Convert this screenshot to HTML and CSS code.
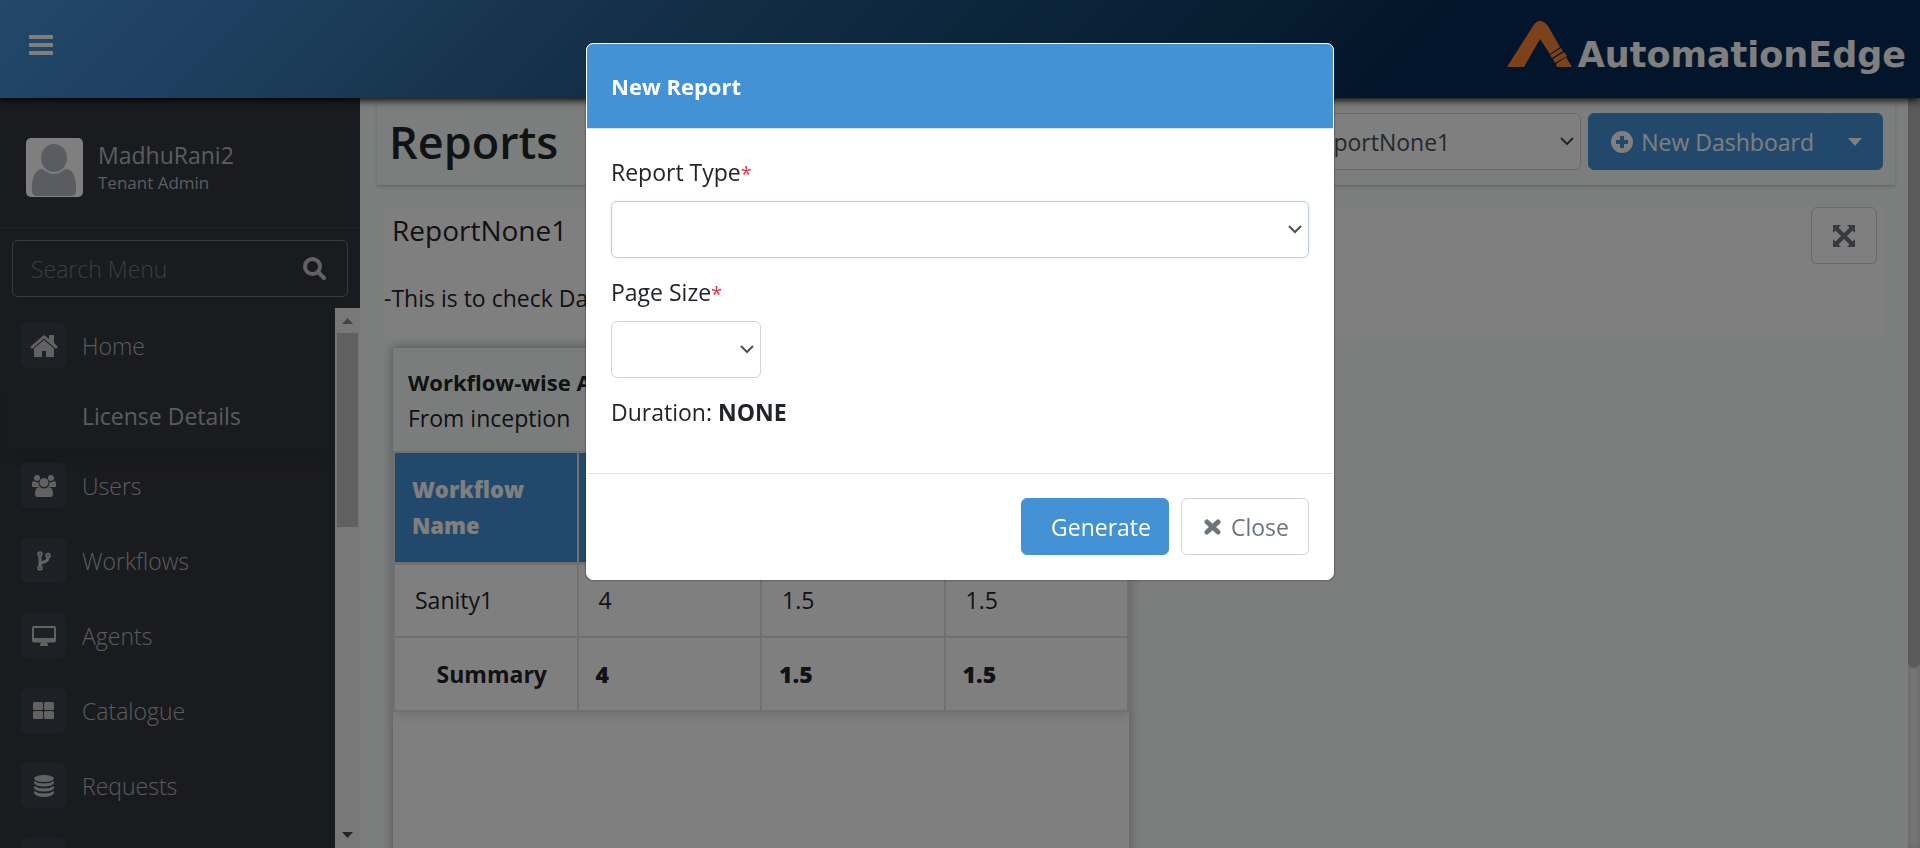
FILE: index.html
```
<!DOCTYPE html>
<html lang="en">
<head>
<meta charset="utf-8">
<title>AutomationEdge - Reports</title>
<link rel="stylesheet" href="styles.css">
</head>
<body>
<div class="app">
  <header class="topbar">
    <button class="menu-toggle" type="button" aria-label="Toggle menu">
      <svg width="24" height="20" viewBox="0 0 24 20" fill="currentColor"><rect width="24" height="4" rx="1"/><rect y="8" width="24" height="4" rx="1"/><rect y="16" width="24" height="4" rx="1"/></svg>
    </button>
    <a class="brand" href="#" aria-label="AutomationEdge">
      <svg class="brand-mark" width="65" height="46" viewBox="0 0 65 46"><path fill="#f98435" d="M0 46 26 5Q29 0 33 0T41 5L53 26 43 33 33 18 17 46Z"/><path fill="#f98435" d="M43 34 54 27 56 30 45 37ZM46 38 57 31 60 35 48 42ZM49 43 59 36 65 46H50Z"/></svg>
      <span class="brand-name">AutomationEdge</span>
    </a>
  </header>
  <div class="shell">
    <aside class="sidebar">
      <div class="profile">
        <svg class="avatar" width="57" height="59" viewBox="0 0 57 59"><rect width="57" height="59" rx="5" fill="#fff"/><path fill="#b4b9c4" d="M6 54C5 42 9 31 16 31Q28 38 40 31C48 31 51 42 50 54Q49 58 45 58H11Q7 58 6 54Z"/><ellipse cx="28" cy="20" rx="14" ry="15" fill="#b4b9c4" stroke="#fff" stroke-width="2"/></svg>
        <div><div class="profile-name">MadhuRani2</div><div class="profile-role">Tenant Admin</div></div>
      </div>
      <div class="search">
        <input type="text" placeholder="Search Menu" aria-label="Search Menu">
        <svg width="23" height="23" viewBox="0 0 23 23" fill="none" stroke="currentColor"><circle cx="9.500" cy="9.500" r="7.500" stroke-width="4"/><path d="m15 15 6 6" stroke-width="4" stroke-linecap="round"/></svg>
      </div>
      <div class="nav-area">
        <nav class="nav">
          <a class="nav-item" href="#"><span class="tile"><svg width="28" height="22" viewBox="0 0 28 22" fill="currentColor"><path d="M14 0 19 4V0H24V8L28 12 26 14 14 3.500 2 14 0 12Z"/><path d="M14 5 24 13.500V21Q24 22 23 22H16V16H12V22H5Q4 22 4 21V13.500Z"/></svg></span>Home</a>
          <a class="nav-item nav-sub" href="#">License Details</a>
          <a class="nav-item" href="#"><span class="tile"><svg width="24" height="22" viewBox="0 0 24 22" fill="currentColor"><circle cx="5" cy="3" r="3"/><circle cx="19" cy="3" r="3"/><circle cx="12" cy="7.500" r="4.500"/><path d="M0 12V9Q0 6 2 6 4 8 6.500 7 6.500 10 8 12ZM24 12V9Q24 6 22 6 20 8 17.500 7 17.500 10 16 12ZM8 12Q12 15 16 12 21 12 21 19 21 22 18 22H6Q3 22 3 19 3 12 8 12Z"/></svg></span>Users</a>
          <a class="nav-item" href="#"><span class="tile"><svg width="14" height="20" viewBox="0 0 14 20" fill="none" stroke="currentColor" stroke-width="2"><circle cx="3" cy="3" r="1.800"/><circle cx="3" cy="17" r="1.800"/><circle cx="11" cy="4.500" r="1.800"/><path d="M3 5V15M11 6.500Q11 10 7 11 3 12 3 14" stroke-width="3"/></svg></span>Workflows</a>
          <a class="nav-item" href="#"><span class="tile"><svg width="24" height="20" viewBox="0 0 24 20" fill="currentColor"><path fill-rule="evenodd" d="M2 0H22Q24 0 24 2V14.500Q24 16.500 22 16.500H15L16 19V20H8V19L9 16.500H2Q0 16.500 0 14.500V2Q0 0 2 0ZM2 2V12H22V2Z"/></svg></span>Agents</a>
          <a class="nav-item" href="#"><span class="tile"><svg width="21" height="17" viewBox="0 0 21 17" fill="currentColor"><rect width="10" height="8" rx="1.500"/><rect x="11" width="10" height="8" rx="1.500"/><rect y="9" width="10" height="8" rx="1.500"/><rect x="11" y="9" width="10" height="8" rx="1.500"/></svg></span>Catalogue</a>
          <a class="nav-item" href="#"><span class="tile"><svg width="20" height="22" viewBox="0 0 20 22" fill="currentColor"><ellipse cx="10" cy="3.500" rx="10" ry="3.500"/><path d="M0 6Q4 8.500 10 8.500T20 6V8Q18 11.500 10 11.500T0 8ZM0 11Q4 13.500 10 13.500T20 11V13Q18 16.500 10 16.500T0 13ZM0 16Q4 18.500 10 18.500T20 16V18Q18 22 10 22T0 18Z"/></svg></span>Requests</a>
          <a class="nav-item" href="#" aria-label="More"><span class="tile"></span></a>
        </nav>
        <div class="scrollbar" aria-hidden="true">
          <svg width="11" height="6" viewBox="0 0 11 6"><path d="M0 6 5.500 0 11 6Z" fill="#888"/></svg>
          <div class="scroll-thumb"></div>
          <svg width="11" height="6" viewBox="0 0 11 6"><path d="M0 0 5.500 6 11 0Z" fill="#484848"/></svg>
        </div>
      </div>
    </aside>
    <main class="content">
      <div class="page-head">
        <h1>Reports</h1>
        <div class="page-actions">
          <div class="select dash-select"><select aria-label="Dashboard"><option>ReportNone1</option></select><svg class="chevron" width="14" height="9" viewBox="0 0 14 9"><path d="m1 1 6 6 6-6"/></svg></div>
          <div class="btn-group">
            <button class="btn btn-primary" type="button"><svg width="22" height="22" viewBox="0 0 22 22"><circle cx="11" cy="11" r="11" fill="#fff"/><path d="M11 5V17M5 11H17" stroke="#4492d6" stroke-width="4"/></svg>New Dashboard</button>
            <button class="btn btn-primary btn-caret" type="button" aria-label="More options"><svg width="14" height="8" viewBox="0 0 14 8"><path d="M0 0H14L7 8Z" fill="#fff"/></svg></button>
          </div>
        </div>
      </div>
      <section class="intro">
        <div class="intro-head">
          <h2>ReportNone1</h2>
          <button class="btn btn-outline btn-expand" type="button" aria-label="Expand"><svg width="22" height="22" viewBox="0 0 22 22" fill="currentColor"><path d="M0 0H8L5.500 2.500 11 8 16.500 2.500 14 0H22V8L19.500 5.500 14 11 19.500 16.500 22 14V22H14L16.500 19.500 11 14 5.500 19.500 8 22H0V14L2.500 16.500 8 11 2.500 5.500 0 8Z"/></svg></button>
        </div>
        <p>-This is to check Dashboard</p>
      </section>
      <section class="report">
        <div class="report-head"><h3>Workflow-wise Automation</h3><div>From inception</div></div>
        <table>
          <thead><tr><th>Workflow Name</th><th></th><th></th><th></th></tr></thead>
          <tbody><tr><td>Sanity1</td><td>4</td><td>1.5</td><td>1.5</td></tr></tbody>
          <tfoot><tr><th>Summary</th><td>4</td><td>1.5</td><td>1.5</td></tr></tfoot>
        </table>
      </section>
    </main>
    <div class="page-scroll" aria-hidden="true"><div class="page-thumb"></div></div>
  </div>
</div>
<div class="backdrop">
  <div class="modal" role="dialog" aria-modal="true" aria-labelledby="modal-title">
    <div class="modal-head"><h2 id="modal-title">New Report</h2></div>
    <div class="modal-body">
      <div class="field">
        <label for="type">Report Type<span class="req">*</span></label>
        <div class="select focused"><select id="type"><option></option></select><svg class="chevron" width="14" height="9" viewBox="0 0 14 9"><path d="m1 1 6 6 6-6"/></svg></div>
      </div>
      <div class="field">
        <label for="size">Page Size<span class="req">*</span></label>
        <div class="select size-select"><select id="size"><option></option></select><svg class="chevron" width="14" height="9" viewBox="0 0 14 9"><path d="m1 1 6 6 6-6"/></svg></div>
      </div>
      <div>Duration: <b>NONE</b></div>
    </div>
    <div class="modal-foot">
      <button class="btn btn-primary btn-generate" type="button">Generate</button>
      <button class="btn btn-outline btn-close" type="button"><svg width="17" height="16" viewBox="0 0 17 16" stroke="currentColor" stroke-width="5" stroke-linecap="round"><path d="m3 3 11 10M14 3 3 13"/></svg>Close</button>
    </div>
  </div>
</div>
</body>
</html>
```
FILE: styles.css
```
* { box-sizing: border-box; }
html, body { height: 100%; }
body {
  margin: 0;
  overflow: hidden;
  color: #212529;
  font: 400 23px/36px "Open Sans", "Noto Sans", sans-serif;
}
h1, h2, h3, p { margin: 0; }
a { color: inherit; text-decoration: none; }
button, input, select { font: inherit; color: inherit; }
svg { display: block; flex: none; }

.app { display: flex; flex-direction: column; height: 100%; }
.topbar {
  position: relative;
  z-index: 1;
  display: flex;
  align-items: center;
  justify-content: space-between;
  flex: none;
  height: 98px;
  padding: 0 14px 0 29px;
  background: linear-gradient(135deg, #4690d0 0%, #3c80c4 12%, #387ab0 17%, #2a6094 31%, #0e3a60 64%, #062a54 73%);
  box-shadow: 0 2px 8px #000;
}
.menu-toggle { padding: 0 0 8px; border: 0; background: none; color: #fff; }
.brand { display: flex; align-items: flex-end; gap: 6px; padding-bottom: 10px; color: #fff; }
.brand-name { font: 700 35px/24px "DejaVu Sans", sans-serif; }

.shell { display: flex; flex: 1; min-height: 0; }
.sidebar {
  display: flex;
  flex-direction: column;
  flex: none;
  width: 360px;
  background: #35373f;
  color: #b8b8bc;
  font-weight: 300;
}
.profile {
  display: flex;
  align-items: center;
  gap: 15px;
  height: 130px;
  padding: 10px 26px 0;
  border-bottom: 1px solid #45474f;
  color: #b4b9c4;
  font-weight: 400;
}
.profile-name { line-height: 30px; }
.profile-role { font-size: 17px; line-height: 26px; }
.search {
  display: flex;
  align-items: center;
  height: 57px;
  margin: 12px 12px 11px;
  padding: 0 21px 0 18px;
  border: 1px solid #777980;
  border-radius: 6px;
  color: #c4c4c4;
}
.search input { flex: 1; min-width: 0; padding: 0; border: 0; outline: 0; background: none; }
.search input::placeholder { color: #747d85; }
.nav-area { display: flex; flex: 1; min-height: 0; }
.nav { flex: 1; overflow: hidden; }
.nav-item { display: flex; align-items: center; gap: 16px; height: 75px; padding-left: 21px; }
.tile {
  display: flex;
  align-items: center;
  justify-content: center;
  width: 45px;
  height: 45px;
  border-radius: 6px;
  background: #3a414a;
  color: #c4c4c4;
}
.nav-sub {
  height: 65px;
  margin-left: 6px;
  padding-left: 76px;
  font-weight: 400;
  box-shadow: 0 10px 20px #30323a;
}
.scrollbar {
  display: flex;
  flex-direction: column;
  align-items: center;
  width: 25px;
  padding: 10px 2px;
  background: #f1f1f1;
}
.scroll-thumb { width: 100%; height: 194px; margin: 9px 0 auto; background: #c1c1c1; }

.content {
  flex: 1;
  min-width: 0;
  overflow: hidden;
  padding: 0 13px 0 17px;
  background: #f7fcf9;
}
.page-head {
  display: flex;
  align-items: center;
  justify-content: space-between;
  height: 88px;
  padding: 0 12px;
  border-bottom: 1px solid #cfd3d2;
  box-shadow: 0 1px 3px #d5d8d7;
}
.page-head h1 { font-size: 45px; font-weight: 600; line-height: 56px; }
.page-actions { display: flex; gap: 7px; }
.dash-select { width: 300px; }
.select { position: relative; }
.select select {
  display: block;
  width: 100%;
  height: 57px;
  padding: 0 24px;
  border: 1px solid #ced4da;
  border-radius: 6px;
  appearance: none;
  background: #fff;
  color: #495057;
}
.focused select { border-color: #bcd0e4; box-shadow: 0 0 3px #dcebf8; outline: 0; }
.chevron {
  position: absolute;
  top: 24px;
  right: 7px;
  fill: none;
  stroke: #495057;
  stroke-width: 2;
  pointer-events: none;
}
.btn {
  display: flex;
  align-items: center;
  gap: 10px;
  height: 57px;
  padding: 0 19px;
  border: 1px solid #ced4da;
  border-radius: 6px;
  background: #fff;
}
.btn-primary { border-color: #4492d6; background: #4492d6; color: #fff; }
.btn-outline { color: #6c757d; }
.btn-group { display: flex; }
.btn-group .btn:first-child { gap: 8px; padding: 0 12px 0 22px; border-radius: 6px 0 0 6px; }
.btn-group .btn-caret { padding: 0 20px; border-radius: 0 6px 6px 0; }
.intro { height: 131px; margin: 21px 11px 9px 7px; background: #fff; }
.intro-head { display: flex; justify-content: space-between; height: 73px; padding: 0 7px 0 8px; }
.intro-head h2 { font-size: 28px; font-weight: 400; line-height: 46px; }
.btn-expand { padding: 0 21px; }
.report {
  width: 738px;
  height: 600px;
  margin-left: 15px;
  border: 1px solid #d0d2d6;
  border-radius: 4px;
  background: #fff;
  box-shadow: 0 0 10px #b0b0b0;
}
.report-head { height: 103px; padding: 16px 15px; background: #f7faf8; }
.report-head h3 { font-size: 22px; font-weight: 700; line-height: 36px; }
table {
  width: 100%;
  border-collapse: collapse;
  table-layout: fixed;
  box-shadow: 0 5px 10px #e4eae7;
}
th, td { height: 74px; padding: 0 20px; border: 2px solid #e0e0e2; text-align: left; }
thead th {
  height: 111px;
  padding: 0 17px;
  border-right-width: 1px;
  border-bottom-width: 3px;
  background: #4492d6;
  color: #fff;
  font-size: 22px;
  font-weight: 800;
}
tfoot th { padding: 0 14px 0 26px; text-align: center; }
tfoot td { padding: 0 17px; font-weight: 800; }
.page-scroll { flex: none; width: 12px; background: #ebebeb; box-shadow: inset 0 0 6px #c8c8c8; }
.page-thumb { height: 570px; border-radius: 0 0 6px 6px; background: #b4b4b4; }

.backdrop {
  position: fixed;
  inset: 0;
  z-index: 2;
  display: flex;
  align-items: flex-start;
  justify-content: center;
  padding-top: 43px;
  background: rgba(0, 0, 0, .5);
}
.modal {
  width: 748px;
  border: 1px solid #fff;
  border-radius: 7px;
  overflow: hidden;
  background: #fff;
  box-shadow: 0 0 2px #222;
}
.modal-head { padding: 24px; border-bottom: 1px solid #dee2e6; background: #4492d6; color: #fff; }
.modal-head h2 { font-size: 22px; font-weight: 700; line-height: 36px; }
.modal-body { padding: 25px 24px 43px; }
.field { margin-bottom: 16px; }
.field label { display: block; margin-bottom: 11px; }
.req { color: #dc3545; font-size: 20px; line-height: 20px; }
.size-select { width: 150px; }
.modal-foot {
  display: flex;
  justify-content: flex-end;
  gap: 12px;
  padding: 24px;
  border-top: 1px solid #dee2e6;
}
.btn-generate { padding: 0 17px 0 29px; }
.btn-close { padding: 0 19px 0 22px; }
```
